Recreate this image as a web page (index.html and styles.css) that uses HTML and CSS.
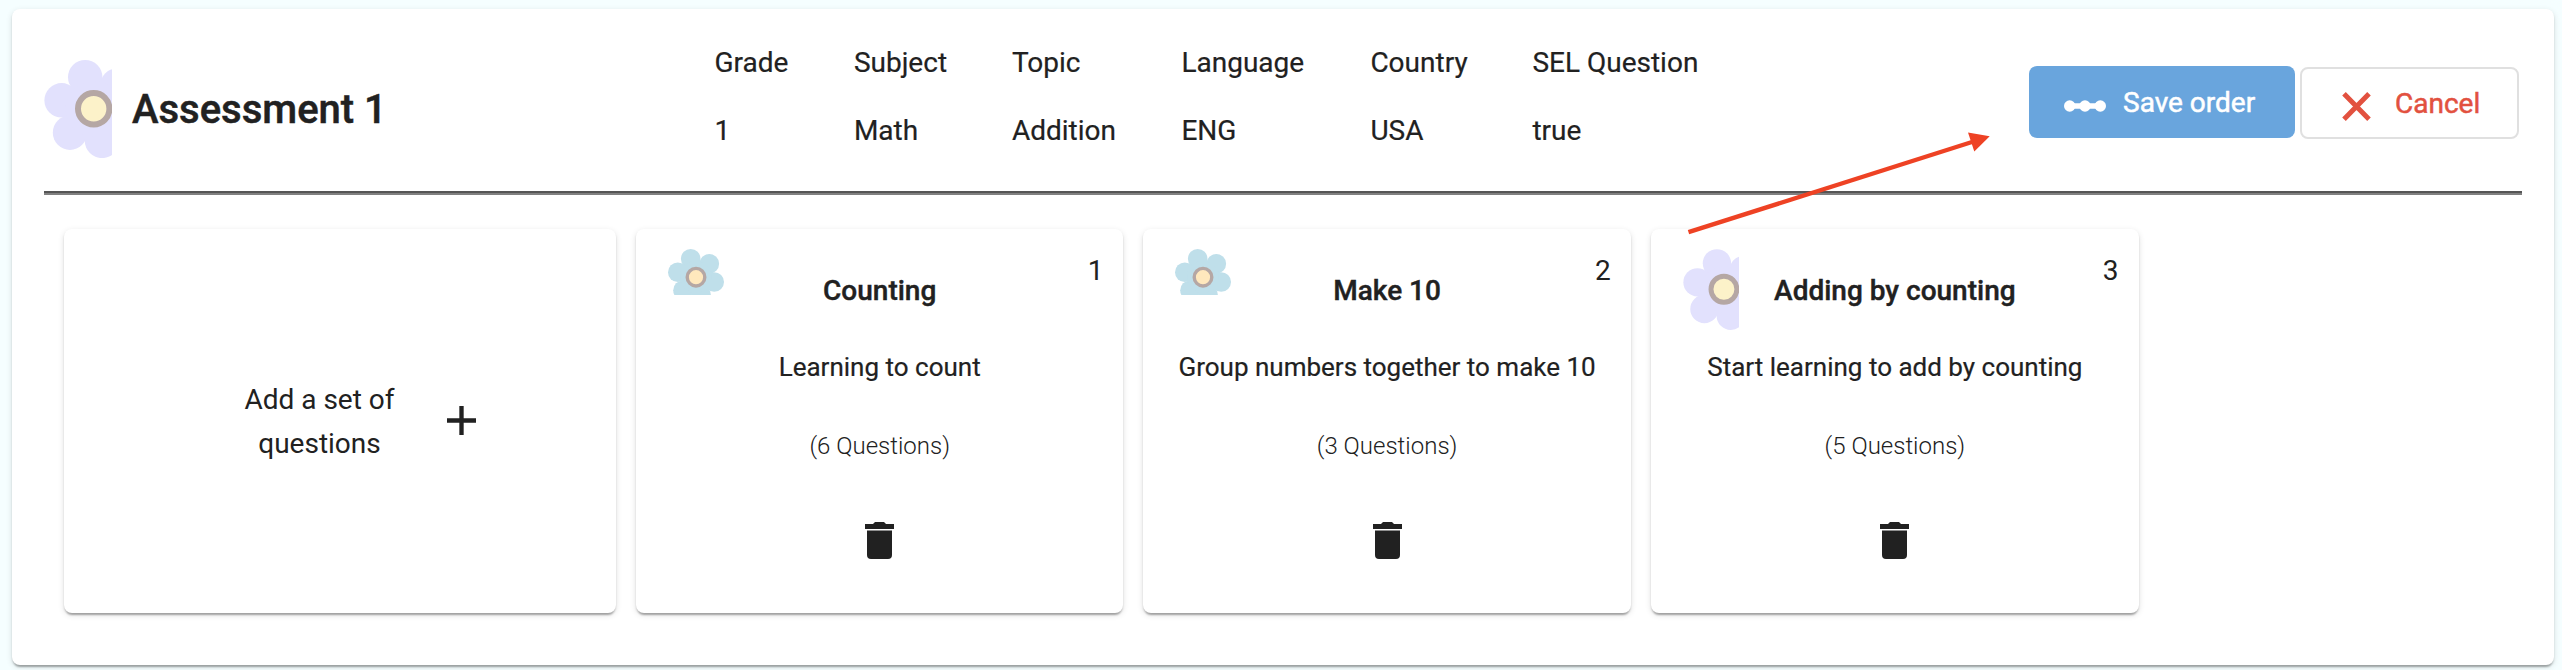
FILE: index.html
```html
<!DOCTYPE html>
<html lang="en">
<head>
<meta charset="utf-8">
<title>Assessment 1</title>
<link rel="stylesheet" href="styles.css">
</head>
<body>
<svg class="defs" width="0" height="0" aria-hidden="true">
  <symbol id="flower-lilac" viewBox="0 0 68 98">
    <g fill="#e2e1fd">
      <circle cx="41.2" cy="17.2" r="17.2"/><circle cx="17.6" cy="40.3" r="17.2"/>
      <circle cx="26" cy="72.7" r="17.2"/><circle cx="58" cy="80.9" r="17.2"/>
      <circle cx="73.500" cy="25.500" r="17.2"/><circle cx="49.700" cy="49" r="28"/>
      <rect x="50" y="30" width="18" height="45"/>
    </g>
    <circle cx="49.700" cy="48.700" r="15.700" fill="#fcf2c9" stroke="#b5a7a4" stroke-width="6"/>
  </symbol>
  <symbol id="flower-blue" viewBox="0 0 56 46">
    <g fill="#bfdfea">
      <circle cx="22.700" cy="9.800" r="9.800"/><circle cx="41.300" cy="14.800" r="9.800"/>
      <circle cx="46.200" cy="33" r="9.800"/><circle cx="9.800" cy="23.200" r="9.800"/>
      <circle cx="15" cy="41.300" r="9.800"/><circle cx="33" cy="45.600" r="9.800"/><circle cx="28" cy="28" r="16"/>
    </g>
    <circle cx="28" cy="28.200" r="8.800" fill="#ffe8bd" stroke="#b5a7a4" stroke-width="3.400"/>
  </symbol>
  <symbol id="trash" viewBox="0 0 29 37">
    <path d="M0 2h8l2-2h9l2 2h8v5H0zM2 8.500h25V33q0 4-4 4H6q-4 0-4-4z" fill="#212121"/>
  </symbol>
</svg>
<main class="panel">
  <header class="header">
    <svg class="header-flower"><use href="#flower-lilac"/></svg>
    <h1 class="title">Assessment 1</h1>
    <dl class="facts">
      <div class="fact grade"><dt>Grade</dt><dd>1</dd></div>
      <div class="fact subject"><dt>Subject</dt><dd>Math</dd></div>
      <div class="fact topic"><dt>Topic</dt><dd>Addition</dd></div>
      <div class="fact language"><dt>Language</dt><dd>ENG</dd></div>
      <div class="fact country"><dt>Country</dt><dd>USA</dd></div>
      <div class="fact"><dt>SEL Question</dt><dd>true</dd></div>
    </dl>
    <div class="actions">
      <button class="btn save"><svg class="dots" viewBox="0 0 42 12"><path d="M6 6h30" stroke="#fff" stroke-width="5.500"/><g fill="#fff"><circle cx="5.700" cy="6" r="5.700"/><circle cx="21" cy="6" r="5.700"/><circle cx="36.300" cy="6" r="5.700"/></g></svg><span>Save order</span></button>
      <button class="btn cancel"><svg class="cross" viewBox="0 0 29 29"><path d="M2 1.800l25 25.400M27 1.800l-25 25.400" stroke="#e2513f" stroke-width="5"/></svg><span>Cancel</span></button>
    </div>
  </header>
  <hr class="rule">
  <section class="cards">
    <div class="card add"><p class="add-text">Add a set of questions</p><svg class="plus" viewBox="0 0 28 28"><path d="M14 0v28M0 14h28" stroke="#212121" stroke-width="4.200"/></svg></div>
    <article class="card">
      <svg class="badge blue"><use href="#flower-blue"/></svg><span class="num">1</span>
      <h2>Counting</h2><p class="desc">Learning to count</p><p class="count">(6 Questions)</p>
      <svg class="trash"><use href="#trash"/></svg>
    </article>
    <article class="card">
      <svg class="badge blue"><use href="#flower-blue"/></svg><span class="num">2</span>
      <h2>Make 10</h2><p class="desc">Group numbers together to make 10</p><p class="count">(3 Questions)</p>
      <svg class="trash"><use href="#trash"/></svg>
    </article>
    <article class="card">
      <svg class="badge lilac"><use href="#flower-lilac"/></svg><span class="num">3</span>
      <h2>Adding by counting</h2><p class="desc">Start learning to add by counting</p><p class="count">(5 Questions)</p>
      <svg class="trash"><use href="#trash"/></svg>
    </article>
  </section>
</main>
<svg class="arrow" viewBox="0 0 310 110"><path d="M8.500 102.200L292 12" stroke="#ee4224" stroke-width="4.400" fill="none"/><path d="M309.700 6.300L288 2.500l6.300 19z" fill="#ee4224"/></svg>
</body>
</html>
```
FILE: styles.css
```css
* { box-sizing: border-box; }
body { margin: 0; padding: 9px 8px 0 12px; height: 670px; overflow: hidden; background: #f5feff; color: #212121; font-family: Roboto, sans-serif; font-size: 28px; }
h1, h2, p, dl, dd { margin: 0; }
svg { display: block; flex: none; }
.defs { position: absolute; }
.panel, .card { background: #fff; border-radius: 8px; box-shadow: 0 4px 2px -2px rgba(0,0,0,.2), 0 2px 2px rgba(0,0,0,.14), 0 2px 6px rgba(0,0,0,.12); }
.panel { height: 656px; padding: 0 32px; }
.header { display: flex; height: 182px; }
.header-flower { width: 68px; height: 98px; margin-top: 51px; }
.title { width: 582px; margin: 77px 0 0 20px; font-size: 40px; line-height: 48px; font-weight: 500; white-space: nowrap; -webkit-text-stroke: .5px; }
.facts { display: flex; padding: 34px 0 0 .4px; line-height: 40px; white-space: nowrap; -webkit-text-stroke: .2px; }
.fact { display: grid; row-gap: 28px; align-content: start; }
.grade { width: 139.5px; }
.subject { width: 158px; }
.topic { width: 169.5px; }
.language { width: 189px; }
.country { width: 162px; }
.actions { display: flex; gap: 5px; margin: 57px 3px 0 auto; }
.btn { display: flex; height: 72px; padding: 0; border: 0; border-radius: 8px; font: 400 28px/74px Roboto, sans-serif; white-space: nowrap; }
.save { width: 266px; padding-left: 35px; background: #69a5dd; color: #fff; -webkit-text-stroke: .5px #fff; }
.dots { width: 42px; height: 12px; margin: 34px 17px 0 0; }
.cancel { width: 219px; margin-top: 1px; padding-left: 40px; border: 2px solid #e0e0e0; background: #fff; color: #e2513f; line-height: 70px; -webkit-text-stroke: .5px #e2513f; }
.cross { width: 29px; height: 29px; margin: 23px 24px 0 0; }
.rule { height: 4px; margin: 0; border: 0; border-top: 2px solid #555; background: #808080; }
.cards { display: flex; gap: 20px; padding: 34px 0 0 20px; }
.card { position: relative; display: flex; flex-direction: column; align-items: center; width: 487.4px; height: 384px; }
.add { width: 552px; flex-direction: row; align-items: flex-start; padding-left: 175.5px; }
.add-text { width: 160px; margin-top: 149px; line-height: 44px; text-align: center; }
.plus { width: 29px; height: 29px; margin: 177px 0 0 47px; }
.badge { position: absolute; top: 20px; left: 32px; }
.blue { width: 56px; height: 46px; }
.lilac { width: 56px; height: 81px; }
.num { position: absolute; top: 22px; right: 20px; line-height: 40px; }
h2 { margin-top: 42px; font-size: 28px; line-height: 40px; font-weight: 500; white-space: nowrap; -webkit-text-stroke: .4px; }
.desc { margin-top: 36px; font-size: 26px; line-height: 40px; white-space: nowrap; -webkit-text-stroke: .2px; }
.count { margin-top: 39px; font-size: 24px; line-height: 40px; font-weight: 300; white-space: nowrap; }
.trash { width: 29px; height: 37px; margin-top: 56px; }
.card:last-child { margin-left: .4px; }
.arrow { position: absolute; left: 1680px; top: 130px; width: 310px; height: 110px; }
```
